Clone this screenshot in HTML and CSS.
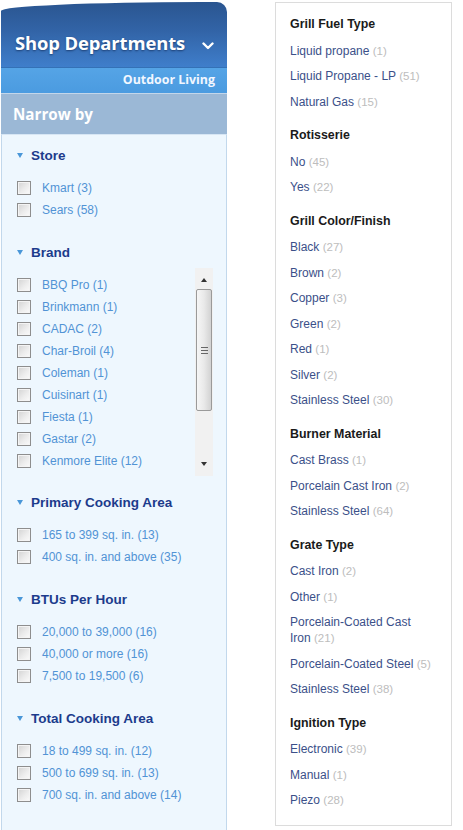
FILE: index.html
```html
<!DOCTYPE html>
<html>
<head>
<meta charset="utf-8">
<link rel="stylesheet" href="styles.css">
</head>
<body>
<div class="page">
  <aside class="nav">
    <div class="dept">
      <span class="dept-title">Shop Departments</span>
      <svg class="chev" width="12" height="8" viewBox="0 0 12 8"><path d="M1.5 1.5 L6 6 L10.5 1.5" stroke="#fff" stroke-width="2.4" fill="none" stroke-linecap="round" stroke-linejoin="round"/></svg>
    </div>
    <div class="crumb">Outdoor Living</div>
    <div class="narrow">Narrow by</div>
    <div class="facets">
      <section class="facet">
        <h3 class="facet-h"><span class="tri"></span>Store</h3>
        <ul class="opts">
          <li class="opt"><span class="cb"></span>Kmart (3)</li>
          <li class="opt"><span class="cb"></span>Sears (58)</li>
        </ul>
      </section>
      <section class="facet facet-brand">
        <h3 class="facet-h"><span class="tri"></span>Brand</h3>
        <div class="brandbox">
          <ul class="brandlist">
            <li class="opt"><span class="cb"></span>BBQ Pro (1)</li>
            <li class="opt"><span class="cb"></span>Brinkmann (1)</li>
            <li class="opt"><span class="cb"></span>CADAC (2)</li>
            <li class="opt"><span class="cb"></span>Char-Broil (4)</li>
            <li class="opt"><span class="cb"></span>Coleman (1)</li>
            <li class="opt"><span class="cb"></span>Cuisinart (1)</li>
            <li class="opt"><span class="cb"></span>Fiesta (1)</li>
            <li class="opt"><span class="cb"></span>Gastar (2)</li>
            <li class="opt"><span class="cb"></span>Kenmore Elite (12)</li>
            <li class="opt"><span class="cb"></span>Weber (8)</li>
          </ul>
          <div class="sb">
            <div class="sb-btn"><span class="arr-up"></span></div>
            <div class="sb-thumb"><span class="grip"></span><span class="grip"></span><span class="grip"></span></div>
            <div class="sb-track"></div>
            <div class="sb-btn"><span class="arr-down"></span></div>
          </div>
        </div>
      </section>
      <section class="facet">
        <h3 class="facet-h"><span class="tri"></span>Primary Cooking Area</h3>
        <ul class="opts">
          <li class="opt"><span class="cb"></span>165 to 399 sq. in. (13)</li>
          <li class="opt"><span class="cb"></span>400 sq. in. and above (35)</li>
        </ul>
      </section>
      <section class="facet">
        <h3 class="facet-h"><span class="tri"></span>BTUs Per Hour</h3>
        <ul class="opts">
          <li class="opt"><span class="cb"></span>20,000 to 39,000 (16)</li>
          <li class="opt"><span class="cb"></span>40,000 or more (16)</li>
          <li class="opt"><span class="cb"></span>7,500 to 19,500 (6)</li>
        </ul>
      </section>
      <section class="facet">
        <h3 class="facet-h"><span class="tri"></span>Total Cooking Area</h3>
        <ul class="opts">
          <li class="opt"><span class="cb"></span>18 to 499 sq. in. (12)</li>
          <li class="opt"><span class="cb"></span>500 to 699 sq. in. (13)</li>
          <li class="opt"><span class="cb"></span>700 sq. in. and above (14)</li>
        </ul>
      </section>
    </div>
  </aside>

  <div class="filters">
    <h4 class="fh first">Grill Fuel Type</h4>
    <div class="fo">Liquid propane <span class="cnt">(1)</span></div>
    <div class="fo">Liquid Propane - LP <span class="cnt">(51)</span></div>
    <div class="fo">Natural Gas <span class="cnt">(15)</span></div>

    <h4 class="fh">Rotisserie</h4>
    <div class="fo">No <span class="cnt">(45)</span></div>
    <div class="fo">Yes <span class="cnt">(22)</span></div>

    <h4 class="fh">Grill Color/Finish</h4>
    <div class="fo">Black <span class="cnt">(27)</span></div>
    <div class="fo">Brown <span class="cnt">(2)</span></div>
    <div class="fo">Copper <span class="cnt">(3)</span></div>
    <div class="fo">Green <span class="cnt">(2)</span></div>
    <div class="fo">Red <span class="cnt">(1)</span></div>
    <div class="fo">Silver <span class="cnt">(2)</span></div>
    <div class="fo">Stainless Steel <span class="cnt">(30)</span></div>

    <h4 class="fh">Burner Material</h4>
    <div class="fo">Cast Brass <span class="cnt">(1)</span></div>
    <div class="fo">Porcelain Cast Iron <span class="cnt">(2)</span></div>
    <div class="fo">Stainless Steel <span class="cnt">(64)</span></div>

    <h4 class="fh">Grate Type</h4>
    <div class="fo">Cast Iron <span class="cnt">(2)</span></div>
    <div class="fo">Other <span class="cnt">(1)</span></div>
    <div class="fo">Porcelain-Coated Cast Iron <span class="cnt">(21)</span></div>
    <div class="fo">Porcelain-Coated Steel <span class="cnt">(5)</span></div>
    <div class="fo">Stainless Steel <span class="cnt">(38)</span></div>

    <h4 class="fh">Ignition Type</h4>
    <div class="fo">Electronic <span class="cnt">(39)</span></div>
    <div class="fo">Manual <span class="cnt">(1)</span></div>
    <div class="fo">Piezo <span class="cnt">(28)</span></div>
  </div>
</div>
</body>
</html>
```

FILE: styles.css
```css
* { box-sizing: border-box; }
html, body { margin: 0; padding: 0; background: #fff; }
body { font-family: "Liberation Sans", Arial, sans-serif; overflow: hidden; height: 830px; }

.page { display: flex; align-items: flex-start; }

/* left navigation */
.nav {
  width: 226px;
  margin-left: 1px;
  margin-top: 2px;
  display: flex;
  flex-direction: column;
}
.dept {
  height: 65px;
  border-top-left-radius: 200px 9px;
  border-top-right-radius: 10px;
  background: linear-gradient(to bottom, #2a5590 0%, #3264a7 45%, #3f7ecb 100%);
  display: flex;
  align-items: center;
  padding: 16px 0 0 14px;
}
.dept-title {
  font-family: "Open Sans", "Liberation Sans", sans-serif;
  font-weight: 700;
  font-size: 18.4px;
  color: #fff;
  letter-spacing: -0.1px;
  text-shadow: 0 1px 2px rgba(10, 30, 70, 0.6);
}
.chev { margin-left: 17px; margin-top: 6px; }
.crumb {
  height: 26px;
  border-top: 1px solid #3471b6;
  background: linear-gradient(to bottom, #55a4e6, #4b9be0);
  font-family: "Open Sans", "Liberation Sans", sans-serif;
  font-weight: 700;
  font-size: 12.4px;
  color: #f2f7ff;
  text-align: right;
  padding-right: 12px;
  line-height: 24px;
}
.narrow {
  height: 41px;
  background: #9bb8d6;
  border-top: 1px solid #c3d6ea;
  font-family: "Open Sans", "Liberation Sans", sans-serif;
  font-weight: 700;
  font-size: 15.2px;
  color: #fff;
  padding-left: 12px;
  line-height: 41px;
}
.facets {
  height: 696px;
  background: #eef7fe;
  border-left: 1px solid #c2d8ec;
  border-right: 1px solid #c2d8ec;
  border-top: 1px solid #d7e6f4;
  padding: 11px 0 0 15px;
}
.facet { margin-bottom: 22px; }
.facet-brand { margin-bottom: 17px; }
.facet-h {
  margin: 0;
  height: 18px;
  display: flex;
  align-items: center;
  font-size: 13.5px;
  font-weight: 700;
  color: #1c3b8c;
}
.tri {
  width: 0; height: 0;
  border-left: 3.5px solid transparent;
  border-right: 3.5px solid transparent;
  border-top: 5px solid #4a97d8;
  margin-right: 8px;
  margin-top: 1px;
}
.opts, .brandlist { list-style: none; margin: 0; padding: 0; }
.opts { margin-top: 13px; }
.opt {
  height: 22px;
  display: flex;
  align-items: center;
  font-size: 12px;
  color: #5193d5;
  white-space: nowrap;
}
.cb {
  width: 14px; height: 14px;
  border: 1px solid #8e8e8e;
  background: linear-gradient(135deg, #d3d3d3 0%, #ececec 55%, #fbfbfb 100%);
  box-shadow: inset 0 0 0 1px #f4f4f4;
  margin-right: 11px;
  margin-top: -1px;
  flex: none;
}

.brandbox {
  margin-top: 7px;
  margin-left: -15px;
  height: 208px;
  display: flex;
}
.brandlist {
  width: 193px;
  padding: 6px 0 0 15px;
  overflow: hidden;
}
.sb {
  width: 18px;
  background: #f1f1f1;
  display: flex;
  flex-direction: column;
}
.sb-btn {
  height: 20px;
  display: flex;
  align-items: center;
  justify-content: center;
}
.arr-up, .arr-down {
  width: 0; height: 0;
  border-left: 3.5px solid transparent;
  border-right: 3.5px solid transparent;
}
.arr-up { border-bottom: 4px solid #333; margin-top: 3px; }
.arr-down { border-top: 4px solid #333; margin-bottom: 4px; }
.sb-thumb {
  height: 122px;
  margin: 1px 1px 0 1px;
  border: 1px solid #9a9a9a;
  border-radius: 2px;
  background: linear-gradient(to right, #f6f6f6 0%, #e9e9e9 50%, #d2d2d2 100%);
  display: flex;
  flex-direction: column;
  align-items: center;
  justify-content: center;
  gap: 2px;
}
.grip { width: 7px; height: 1px; background: #666; }
.sb-track { flex: 1; }

/* right filter box */
.filters {
  margin-left: 48px;
  margin-top: 2px;
  width: 177px;
  height: 824px;
  border: 1px solid #dcdcdc;
  padding: 13px 20px 0 14px;
  background: #fff;
}
.fh {
  margin: 17.5px 0 0;
  font-size: 12.4px;
  font-weight: 700;
  line-height: 16px;
  color: #1a1a1a;
}
.fh.first { margin-top: 0; }
.fo {
  margin-top: 9.5px;
  font-size: 12px;
  line-height: 16px;
  color: #3b5089;
}
.fh + .fo { margin-top: 10.5px; }
.cnt { color: #bdbdbd; font-size: 11.5px; }
```
